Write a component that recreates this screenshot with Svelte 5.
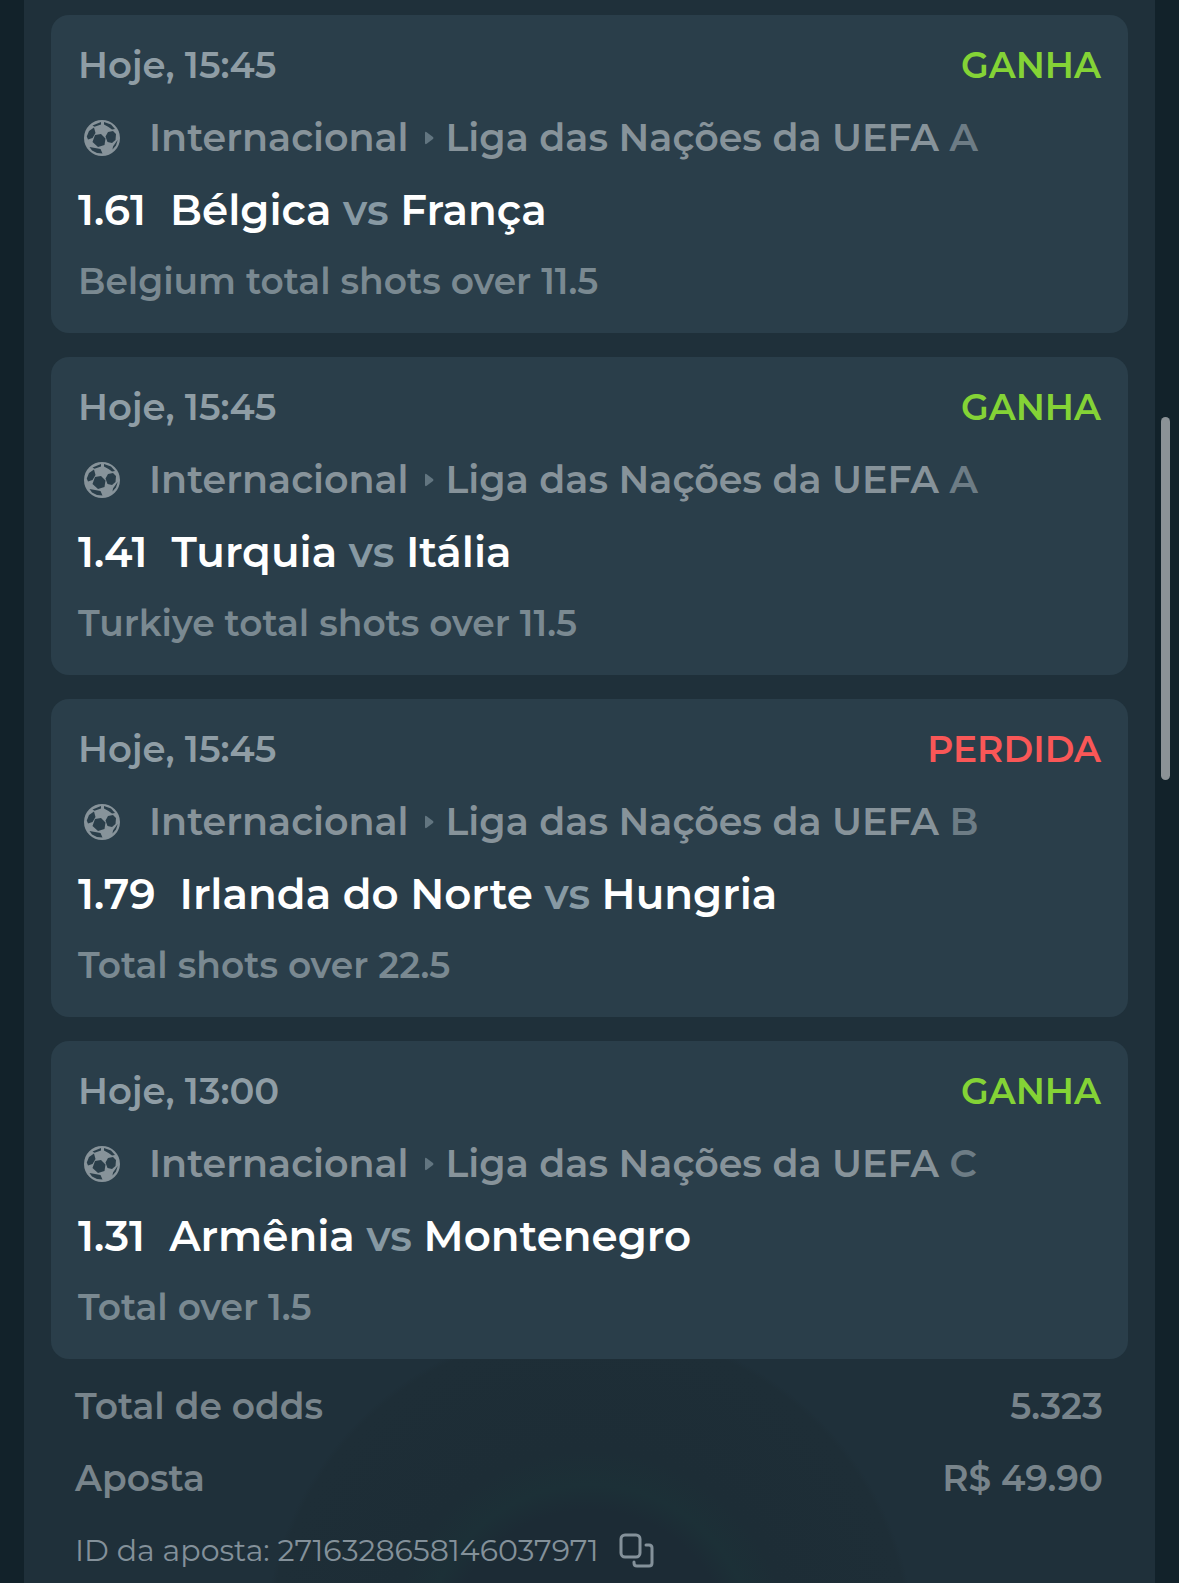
<script lang="ts">
	type Bet = {
		time: string;
		won: boolean;
		group: string;
		odds: string;
		home: string;
		away: string;
		market: string;
	};

	const betId = '2716328658146037971';

	let bets = $state<Bet[]>([
		{
			time: 'Hoje, 15:45',
			won: true,
			group: 'A',
			odds: '1.61',
			home: 'Bélgica',
			away: 'França',
			market: 'Belgium total shots over 11.5'
		},
		{
			time: 'Hoje, 15:45',
			won: true,
			group: 'A',
			odds: '1.41',
			home: 'Turquia',
			away: 'Itália',
			market: 'Turkiye total shots over 11.5'
		},
		{
			time: 'Hoje, 15:45',
			won: false,
			group: 'B',
			odds: '1.79',
			home: 'Irlanda do Norte',
			away: 'Hungria',
			market: 'Total shots over 22.5'
		},
		{
			time: 'Hoje, 13:00',
			won: true,
			group: 'C',
			odds: '1.31',
			home: 'Armênia',
			away: 'Montenegro',
			market: 'Total over 1.5'
		}
	]);

	function copyId() {
		navigator.clipboard?.writeText(betId);
	}
</script>

<main class="panel">
	<div class="bets">
		{#each bets as bet}
			<article class="bet">
				<div class="row between">
					<span class="time">{bet.time}</span>
					<span class="status" class:lost={!bet.won}>{bet.won ? 'GANHA' : 'PERDIDA'}</span>
				</div>
				<div class="row league">
					<!-- solid disc with the dark panels cut out of it -->
					<svg class="ball" viewBox="0 0 36 36" aria-hidden="true">
						<path
							fill="currentColor"
							fill-rule="evenodd"
							d="M18 0A18 18 0 1 1 18 36A18 18 0 1 1 18 0Z
							M11 15L17 14L21.500 18.500L20.500 25L14 27L8.500 22Z
							M24 12L29 11L32 14L31.500 20L28 23L23.500 22L21.500 16.500Z
							M10 7.500L11.500 13L8.500 18L4 19.500L2.800 16.500L5 11Z
							M8.500 5.500L17 2L17 4.500L10.500 6.800Z
							M20 2L27 4.500L31 9L28 9.500L24.500 7L20 4.500Z
							M32.500 21.500L33.700 20L32 25.500L28.500 29.500L29 26.500Z
							M5.500 27L11 28L16.500 29L18.500 33.500L13 33L8 30.500Z"
						/>
					</svg>
					<span class="country">Internacional</span>
					<svg class="arrow" viewBox="0 0 9 14" aria-hidden="true">
						<path d="M0 2Q0 0 2 1.500L8 6Q9 7 8 8L2 12.500Q0 14 0 12z" fill="currentColor" />
					</svg>
					<span>Liga das Nações da UEFA <span class="group">{bet.group}</span></span>
				</div>
				<div class="row match">
					<span>{bet.odds}</span>
					<span>{bet.home} <span class="vs">vs</span> {bet.away}</span>
				</div>
				<div class="row market">{bet.market}</div>
			</article>
		{/each}
	</div>

	<footer class="summary">
		<div class="row between">
			<span>Total de odds</span>
			<span>5.323</span>
		</div>
		<div class="row between">
			<span>Aposta</span>
			<span>R$ 49.90</span>
		</div>
		<div class="row id">
			<span>ID da aposta: {betId}</span>
			<button onclick={copyId} aria-label="Copiar ID da aposta">
				<svg viewBox="0 0 36 36" fill="none" stroke="currentColor" stroke-width="3" stroke-linecap="round">
					<rect x="2" y="2" width="19" height="22" rx="4" />
					<path d="M27 12h3q3 0 3 3v15q0 3-3 3H18q-3 0-3-3v-1" />
				</svg>
			</button>
		</div>
	</footer>
</main>
<div class="scroll-thumb"></div>

<style>
	:global(body) {
		margin: 0;
		background: #12222a;
	}

	.panel {
		box-sizing: border-box;
		min-height: 100vh;
		margin: 0 24px;
		padding: 15px 27px 8px;
		font-family: Montserrat, Inter, sans-serif;
		font-size: 36px;
		font-weight: 600;
		line-height: 46px;
		white-space: nowrap;
		background:
			radial-gradient(
				circle at 50% calc(100% + 67px),
				#1c2b35 140px,
				#1c3037 165px,
				#1d2d36 200px,
				#1e2e37 320px,
				transparent 326px
			),
			#1f303a;
	}

	.bets {
		display: grid;
		gap: 24px;
	}

	.bet {
		display: grid;
		gap: 24px;
		padding: 27px;
		border-radius: 18px;
		background: #2a3e4a;
	}

	.row {
		display: flex;
		height: 48px;
	}

	.between {
		justify-content: space-between;
	}

	.time {
		color: #8f9da5;
		font-size: 37px;
	}

	.status {
		color: #84d336;
	}

	.lost {
		color: #f95757;
	}

	.league {
		align-items: center;
		color: #87939a;
		font-size: 38px;
	}

	.ball {
		width: 36px;
		height: 36px;
		margin-left: 6px;
	}

	.country {
		margin-left: 29px;
	}

	.arrow {
		width: 9px;
		height: 14px;
		margin: 0 12px 0 16px;
		color: #627580;
	}

	.group {
		color: #6d7c85;
	}

	.match {
		align-items: center;
		gap: 24px;
		color: #fff;
		font-size: 42px;
	}

	.vs {
		color: #8799a3;
	}

	.market {
		color: #7a8991;
	}

	.summary {
		display: grid;
		gap: 24px;
		padding: 24px 25px 0 24px;
		color: #78848b;
	}

	.id {
		align-items: center;
		gap: 20px;
		font-size: 30px;
		font-weight: 400;
		color: #84919a;
	}

	button {
		display: flex;
		padding: 0;
		border: none;
		background: none;
		color: #84919a;
		cursor: pointer;
	}

	button svg {
		width: 36px;
		height: 36px;
	}

	.scroll-thumb {
		position: fixed;
		top: 417px;
		right: 9px;
		width: 9px;
		height: 363px;
		border-radius: 5px;
		background: #8b9296;
	}
</style>
